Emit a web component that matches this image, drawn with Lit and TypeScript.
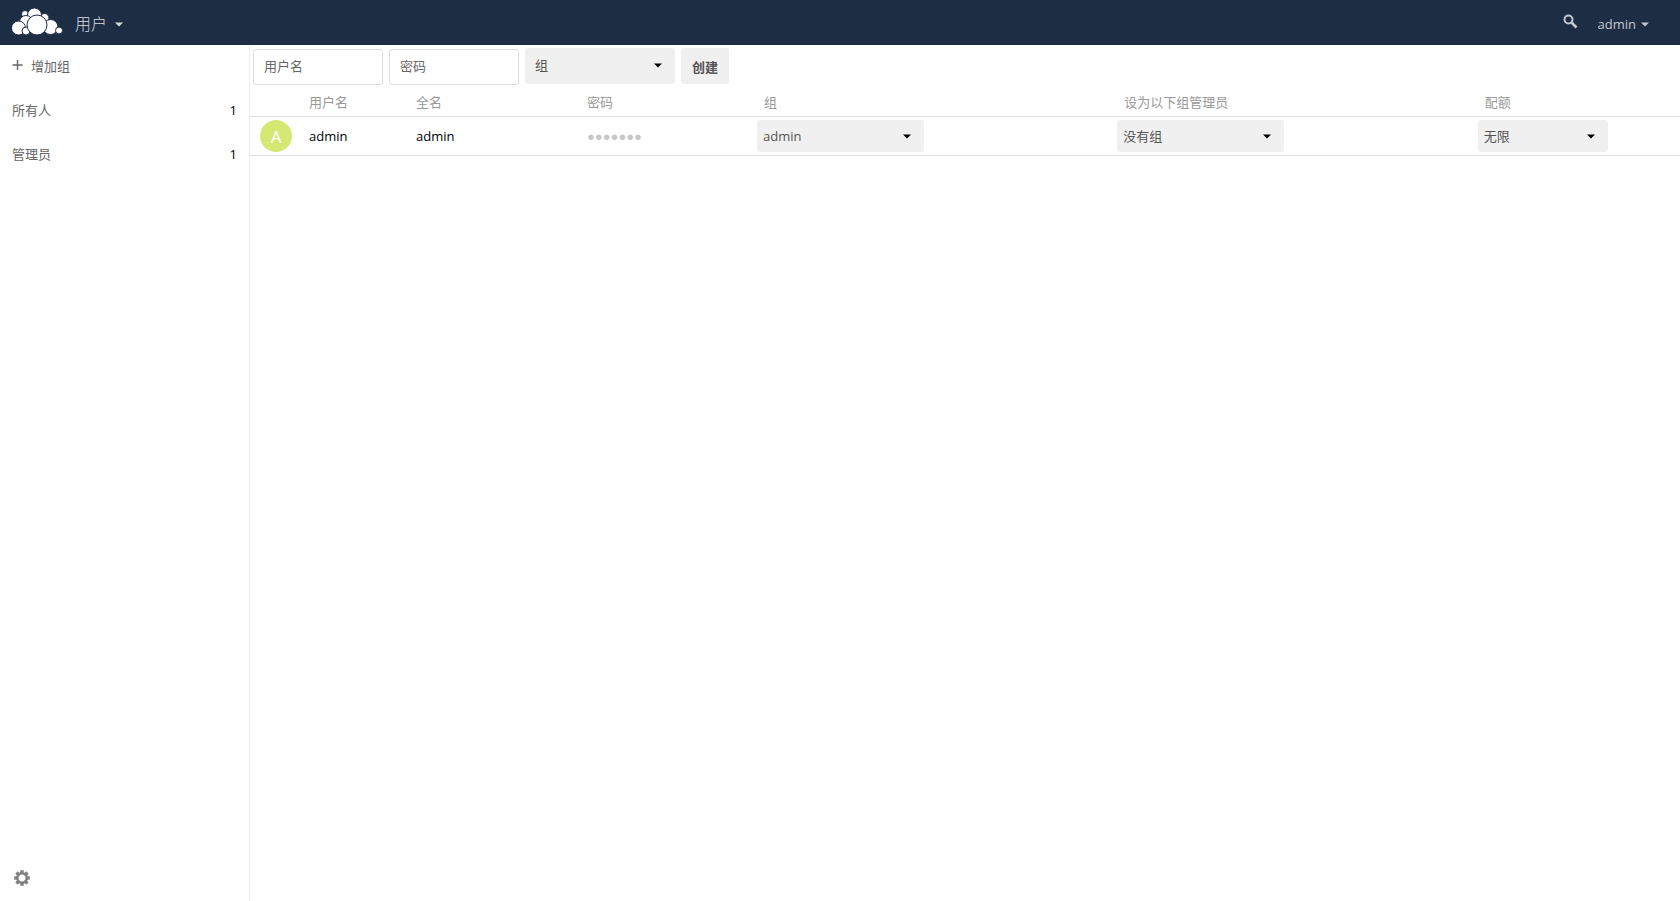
import { LitElement, html, css, svg } from "lit";
import { customElement, property, state } from "lit/decorators.js";

const caret = svg`<path d="M0 0.5h8L4 4.5z" fill="currentColor"/>`;

interface Group { name: string; count: number; }
interface User { name: string; fullName: string; color: string; }

@customElement("caret-select")
class CaretSelect extends LitElement {
  @property({ type: Array }) options: string[] = [];
  @property() label = "";
  @property({ type: Boolean, reflect: true }) tall = false;

  static styles = css`
    :host { display: grid; font-family: "Open Sans", "Noto Sans CJK SC", sans-serif; }
    select {
      grid-area: 1 / 1;
      appearance: none;
      box-sizing: border-box;
      width: 100%;
      height: 32px;
      margin: 0;
      padding: 0 24px 0 6px;
      border: 0;
      border-radius: 3px;
      background: #f0f0f0;
      color: #555;
      font-family: inherit;
      font-size: 13px;
    }
    :host([tall]) select { height: 36px; padding: 0 24px 2px 10px; }
    :host([tall]) svg { margin-bottom: 2px; }
    svg {
      grid-area: 1 / 1;
      place-self: center end;
      margin-right: 13px;
      pointer-events: none;
      color: #000;
    }
  `;

  render() {
    return html`
      <select aria-label=${this.label}>
        ${this.options.map((o) => html`<option>${o}</option>`)}
      </select>
      <svg width="8" height="5" viewBox="0 0 8 5" aria-hidden="true">${caret}</svg>
    `;
  }
}

@customElement("app-root")
class AppRoot extends LitElement {
  @state() private groups: Group[] = [
    { name: "所有人", count: 1 },
    { name: "管理员", count: 1 },
  ];
  @state() private users: User[] = [{ name: "admin", fullName: "admin", color: "#d5e874" }];

  static styles = css`
    :host {
      display: flex;
      flex-direction: column;
      min-height: 100vh;
      background: #fff;
      color: #000;
      font-family: "Open Sans", "Noto Sans CJK SC", sans-serif;
      font-size: 13px;
      line-height: 20px;
    }
    a { color: inherit; text-decoration: none; }
    svg { display: block; }
    header {
      display: flex;
      align-items: center;
      box-sizing: border-box;
      height: 45px;
      padding: 0 31px 2px 12px;
      background: #1d2d44;
      color: #c3c8ce;
    }
    .menu {
      display: flex;
      align-items: center;
      gap: 5px;
      padding: 4px 0 0;
      border: 0;
      background: none;
      color: inherit;
      font-family: inherit;
      font-size: 13px;
      line-height: 20px;
    }
    .menu svg { margin-top: 2px; }
    .apps { gap: 8px; margin-left: 12px; font-size: 16px; font-weight: 300; color: #d8dce0; }
    .search {
      margin-left: auto;
      margin-right: 20px;
      padding: 0;
      border: 0;
      background: none;
      color: inherit;
    }
    .body { display: flex; flex: 1; }
    nav {
      display: flex;
      flex-direction: column;
      box-sizing: border-box;
      flex: 0 0 250px;
      border-right: 1px solid #eee;
      color: #666;
    }
    ul { flex: 1; margin: 0; padding: 0; list-style: none; }
    nav a {
      display: flex;
      align-items: center;
      box-sizing: border-box;
      height: 44px;
      padding: 0 12px 2px;
      gap: 8px;
    }
    .count { margin-left: auto; color: #000; }
    .settings {
      align-self: flex-start;
      padding: 14px 14px 15px;
      border: 0;
      background: none;
      color: #808080;
    }
    main { flex: 1; min-width: 0; }
    form { display: flex; gap: 6px; padding: 3px; }
    input {
      box-sizing: border-box;
      width: 130px;
      height: 36px;
      margin: 1px 0 0;
      padding: 0 10px 2px;
      border: 1px solid #ddd;
      border-radius: 3px;
      color: #333;
      font-family: inherit;
      font-size: 13px;
    }
    input::placeholder { color: #666; }
    .group { width: 150px; }
    .create {
      height: 36px;
      padding: 0 11px;
      border: 0;
      border-radius: 3px;
      background: #f0f0f0;
      color: #555;
      font-family: inherit;
      font-size: 13px;
      font-weight: 700;
    }
    table { width: 100%; table-layout: fixed; border-collapse: collapse; }
    th, td {
      padding: 0 0 0 10px;
      border-bottom: 1px solid #ddd;
      text-align: left;
      font-weight: 400;
    }
    th { height: 28px; color: #999; }
    td { height: 38px; }
    .pick { padding-left: 3px; }
    .c-avatar { width: 49px; }
    .c-name { width: 107px; }
    .c-full { width: 171px; }
    .c-pass { width: 177px; }
    .c-group { width: 25.2%; }
    .select { width: 167px; }
    .quota { width: 130px; }
    .avatar {
      width: 32px;
      height: 32px;
      border-radius: 50%;
      color: #fff;
      font-size: 17px;
      line-height: 33px;
      text-align: center;
    }
    .dots {
      display: block;
      padding-top: 2px;
      color: #c7c7c7;
      font-family: "Liberation Sans", sans-serif;
    }
  `;

  private caret() {
    return html`<svg width="8" height="5" viewBox="0 0 8 5" aria-hidden="true">${caret}</svg>`;
  }

  private logo() {
    const circles = [
      [13, 7, 3.5], [32.5, 11, 4.5], [22.5, 8, 7], [14, 15, 6.5], [6.5, 21, 7],
      [38.5, 20, 7.5], [47, 23.5, 3.5], [14, 24, 4], [25, 18, 10],
    ];
    return html`
      <svg width="51" height="29" viewBox="0 0 51 29" role="img" aria-label="ownCloud">
        ${circles.map(([x, y, r]) => svg`<circle cx=${x} cy=${y} r=${r} fill="#fff" stroke="#1d2d44"/>`)}
      </svg>`;
  }

  render() {
    return html`
      <header>
        <a href="#">${this.logo()}</a>
        <button class="menu apps">用户 ${this.caret()}</button>
        <button class="search" aria-label="搜索">
          <svg width="15" height="15" viewBox="0 0 15 15" fill="none" stroke="currentColor">
            <circle cx="5.5" cy="5.5" r="4" stroke-width="2"/>
            <path d="M8.5 8.5l5 5" stroke-width="2.6"/>
          </svg>
        </button>
        <button class="menu">admin ${this.caret()}</button>
      </header>
      <div class="body">
        <nav>
          <ul>
            <li>
              <a href="#">
                <svg width="11" height="12" viewBox="0 0 11 12" fill="none" stroke="#666" stroke-width="1.4">
                  <path d="M5.5 0v10M0.5 5h10"/>
                </svg>
                增加组
              </a>
            </li>
            ${this.groups.map((g) => html`
              <li><a href="#">${g.name}<span class="count">${g.count}</span></a></li>`)}
          </ul>
          <button class="settings" aria-label="设置">
            <svg width="16" height="16" viewBox="-8 -8 16 16" fill="currentColor">
              ${[0, 45, 90, 135].map((a) => svg`<rect x="-1.7" y="-7.8" width="3.4" height="3.6" transform="rotate(${a})"/><rect x="-1.7" y="4.2" width="3.4" height="3.6" transform="rotate(${a})"/>`)}
              <circle r="4.7" fill="none" stroke="currentColor" stroke-width="2.4"/>
            </svg>
          </button>
        </nav>
        <main>
          <form @submit=${(e: Event) => e.preventDefault()}>
            <input type="text" placeholder="用户名" aria-label="用户名">
            <input type="password" placeholder="密码" aria-label="密码">
            <caret-select class="group" tall label="组" .options=${["组"]}></caret-select>
            <button class="create">创建</button>
          </form>
          <table>
            <colgroup>
              <col class="c-avatar"><col class="c-name"><col class="c-full"><col class="c-pass">
              <col class="c-group"><col class="c-group"><col>
            </colgroup>
            <thead>
              <tr>
                <th></th><th>用户名</th><th>全名</th><th>密码</th>
                <th>组</th><th>设为以下组管理员</th><th>配额</th>
              </tr>
            </thead>
            <tbody>
              ${this.users.map((u) => html`
                <tr>
                  <td><div class="avatar" style="background:${u.color}">${u.name[0].toUpperCase()}</div></td>
                  <td>${u.name}</td>
                  <td>${u.fullName}</td>
                  <td><span class="dots">●●●●●●●</span></td>
                  <td class="pick"><caret-select class="select" label="组" .options=${["admin"]}></caret-select></td>
                  <td class="pick"><caret-select class="select" label="设为以下组管理员" .options=${["没有组"]}></caret-select></td>
                  <td class="pick"><caret-select class="quota" label="配额" .options=${["无限"]}></caret-select></td>
                </tr>`)}
            </tbody>
          </table>
        </main>
      </div>
    `;
  }
}
